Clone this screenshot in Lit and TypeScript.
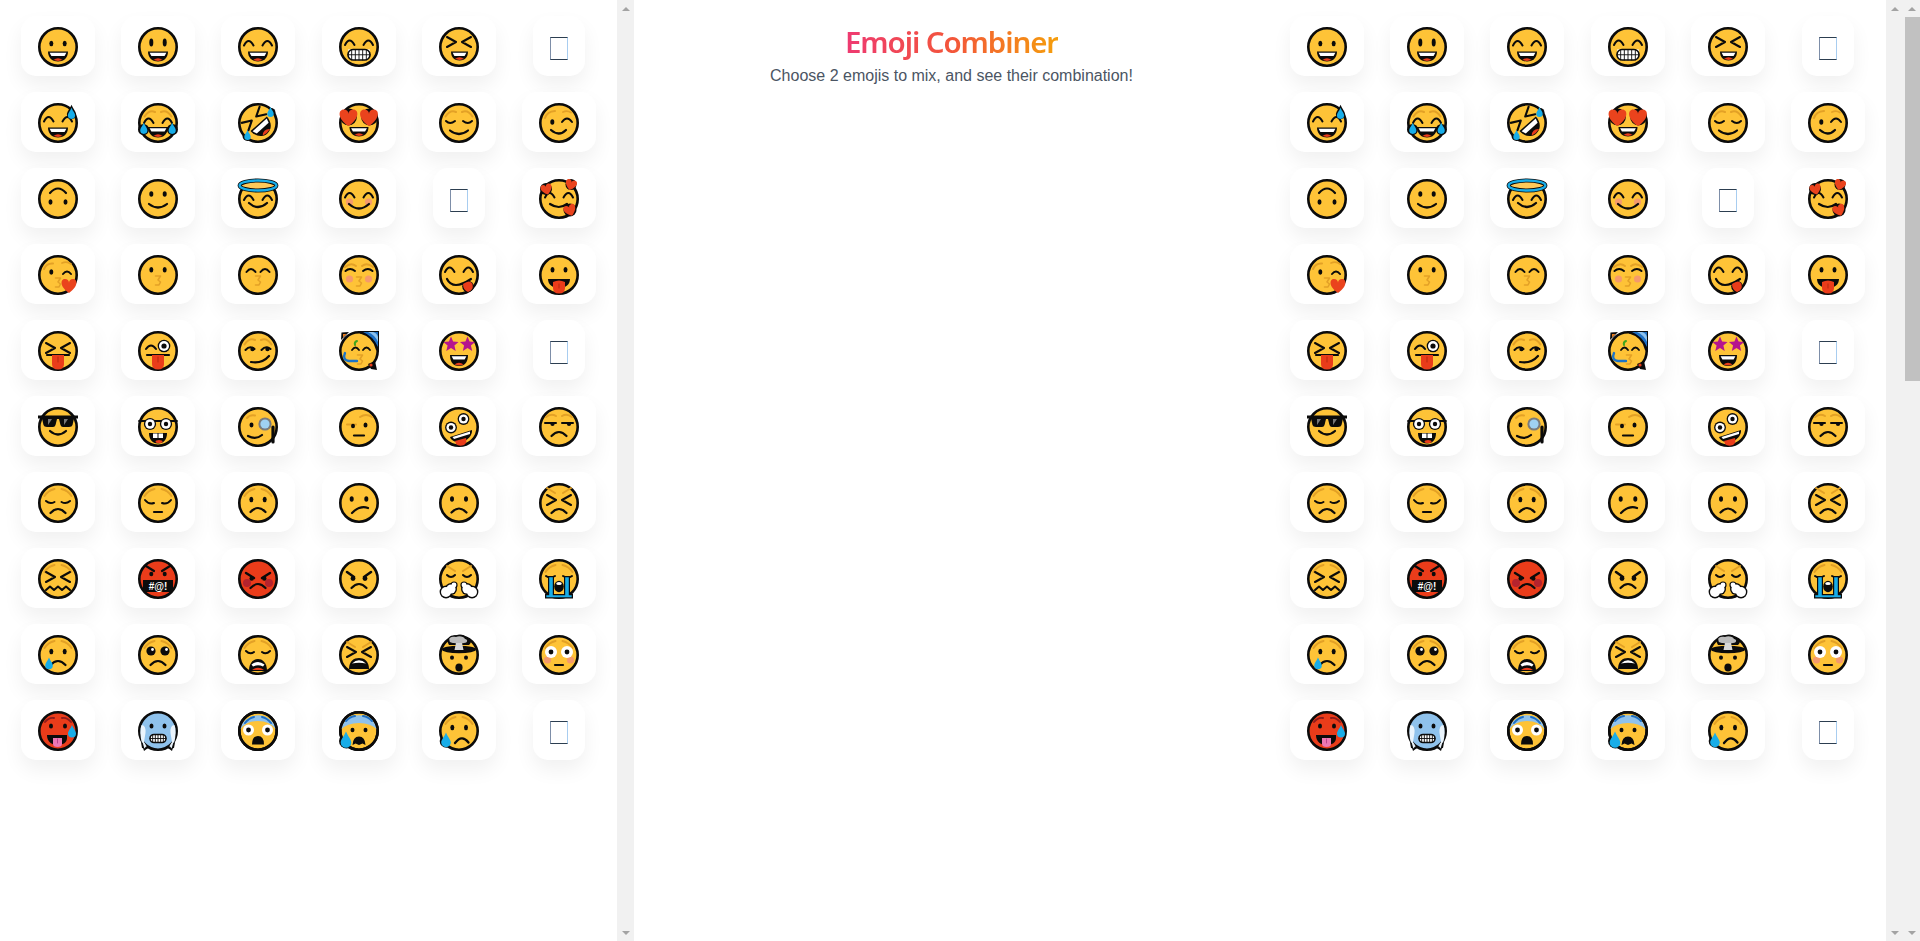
import { LitElement, html, css, svg } from "lit";
import { customElement, property } from "lit/decorators.js";

const Y = "#fec337", K = "#0b0b0b", R = "#ea3c1a", B = "#18ade8", O = "#e3a126", LB = "#8fc2ec", W = "#fff";

const P = (d: string, w = 2, c = K) =>
  svg`<path d=${d} fill="none" stroke=${c} stroke-width=${w} stroke-linecap="round" stroke-linejoin="round"/>`;
const F = (d: string, c = K) => svg`<path d=${d} fill=${c}/>`;
const C = (x: number, y: number, r: number, c = K) => svg`<circle cx=${x} cy=${y} r=${r} fill=${c}/>`;
const El = (x: number, y: number, rx: number, ry: number, c = K) => svg`<ellipse cx=${x} cy=${y} rx=${rx} ry=${ry} fill=${c}/>`;
const face = (c = Y) => svg`<circle cx="20" cy="20" r="18.7" fill=${c} stroke=${K} stroke-width="2.6"/>`;
const ring = () => svg`<circle cx="20" cy="20" r="18.7" fill="none" stroke=${K} stroke-width="2.6"/>`;

const dots = (y = 15, ry = 2.7, a = 13.3, b = 26.7) => svg`${El(a, y, 2, ry)}${El(b, y, 2, ry)}`;
const arcs = (y = 18.5) =>
  P(`M6 ${y} Q10.5 ${y - 9} 15.5 ${y} M24.5 ${y} Q29.5 ${y - 9} 34 ${y}`);
const brows = () => P("M6.5 13.5 Q11 6.5 17 9 M33.5 13.5 Q29 6.5 23 9", 2, O);
const sadBrows = () => P("M6.5 13 Q10 7.5 16.5 6 M33.5 13 Q30 7.5 23.5 6", 2, O);
const angryOr = () => P("M8 7 L16 12 M32 7 L24 12", 2, O);
const closed = (y = 19) => P(`M7 ${y} Q11 ${y + 4} 16 ${y} M24 ${y} Q29 ${y + 4} 33 ${y}`);
const xEyes = (y = 17.5) =>
  P(`M8 ${y - 5} L17 ${y} L8 ${y + 5} M32 ${y - 5} L23 ${y} L32 ${y + 5}`, 2.1);
const smile = (a = 11, b = 29, y = 25, d = 8) => P(`M${a} ${y} Q20 ${y + d} ${b} ${y}`, 2.2);
const frown = (y = 30) => P(`M12.5 ${y} Q20 ${y - 8} 27.5 ${y}`, 2.2);
const mouth = (a = 10, b = 30, t = 24.5, bt = 34.5) => {
  const m = (a + b) / 2;
  return svg`${F(`M${a} ${t} H${b} C${b} ${bt - 3} ${m + 5} ${bt} ${m} ${bt} C${m - 5} ${bt} ${a} ${bt - 3} ${a} ${t}Z`)}
  ${F(`M${a + 1.6} ${t + 1.2} H${b - 1.6} L${b - 3.4} ${t + 4.6} H${a + 3.4}Z`, W)}
  ${F(`M${m - 4.6} ${bt - 1.4} Q${m} ${bt - 5.2} ${m + 4.6} ${bt - 1.4} Q${m} ${bt + 0.2} ${m - 4.6} ${bt - 1.4}Z`, R)}`;
};
const kiss = (x = 20, y = 27) =>
  P(`M${x - 2.5} ${y - 5} H${x + 2.5} L${x} ${y - 1} L${x + 2.5} ${y + 1} L${x + 1} ${y + 4} H${x - 2.5}`, 1.6, O);
const heart = (x: number, y: number, s: number, rot = 0, c = "#ea431d") =>
  svg`<path transform="translate(${x} ${y}) rotate(${rot}) scale(${s})" d="M0 .95C-1.2 .15-1.1-.8-.5-.8-.2-.8 0-.6 0-.35 0-.6 .2-.8 .5-.8 1.1-.8 1.2 .15 0 .95Z" fill=${c}/>`;
const star = (x: number, y: number, r: number) => {
  const pts: string[] = [];
  for (let i = 0; i < 10; i++) {
    const rad = i % 2 ? r * 0.45 : r;
    const a = -Math.PI / 2 + (i * Math.PI) / 5;
    pts.push(`${(x + rad * Math.cos(a)).toFixed(1)},${(y + rad * Math.sin(a)).toFixed(1)}`);
  }
  return svg`<polygon points=${pts.join(" ")} fill="#b5148e"/>`;
};
const drop = (x: number, y: number, r: number, c = B) =>
  F(`M${x} ${y - r * 2} C${x + r * 0.4} ${y - r} ${x + r} ${y - r * 0.5} ${x + r} ${y + r * 0.1} A${r} ${r} 0 0 1 ${x - r} ${y + r * 0.1} C${x - r} ${y - r * 0.5} ${x - r * 0.4} ${y - r} ${x} ${y - r * 2}Z`, c);
const eye = (x: number, y: number, r = 5.5, p = 2.4) =>
  svg`${C(x, y, r + 1.3)}${C(x, y, r, W)}${C(x, y, p)}`;
const tongue = () => svg`${P("M9 24 H31", 2.2)}${F("M14 24 H26 V33 Q26 38.5 20 38.5 Q14 38.5 14 33Z", R)}${P("M20 26 V31", 1, "#b5280e")}`;
const grid = (a: number, b: number, t: number, bt: number, r: number) => {
  const lines: any[] = [];
  for (let x = a + (b - a) / 6; x < b - 1; x += (b - a) / 6) lines.push(P(`M${x} ${t} V${bt}`, 0.9));
  return svg`<rect x=${a} y=${t} width=${b - a} height=${bt - t} rx=${r} fill=${W} stroke=${K} stroke-width="1.6"/>${lines}${P(`M${a} ${(t + bt) / 2} H${b}`, 0.9)}`;
};

const E: Record<string, any> = {
  grin: svg`${face()}${dots(16.5, 2.7)}${mouth()}`,
  smiley: svg`${face()}${El(13.3, 15.5, 2, 4)}${El(26.7, 15.5, 2, 4)}${mouth()}`,
  smile3: svg`${face()}${arcs()}${mouth()}`,
  beam: svg`${face()}${arcs(18)}${F("M9 22.5 H31 C31 29 26 33.5 20 33.5 C14 33.5 9 29 9 22.5Z", W)}${grid(9, 31, 22.5, 33, 5)}`,
  squint: svg`${face()}${xEyes(15)}${mouth(12, 29, 24.5, 33.5)}`,
  sweat: svg`${face()}${arcs()}${mouth()}${drop(33.5, 11, 4.6, K)}${drop(33.5, 12, 3.6)}`,
  joy: svg`${face()}${brows()}${arcs(20)}${C(5.5, 26.5, 5.5)}${C(34.5, 26.5, 5.5)}${mouth(10, 30, 24, 34.5)}${drop(5.8, 27, 3.6)}${drop(34.2, 27, 3.6)}`,
  rofl: svg`${C(33, 9.5, 4.5)}${C(9.5, 33, 5)}${face()}<g transform="rotate(-42 20 20)">${xEyes(14)}${F("M9 21 H31 C31 29 26 34 20 34 C14 34 9 29 9 21Z")}${F("M10.5 22.5 H29.5 L28 27 H12Z", W)}${F("M15 32.5 Q20 27.5 25 32.5 Q20 34 15 32.5Z", R)}</g>${drop(32.5, 10.5, 3.2)}${drop(9.5, 33.5, 3.2)}`,
  hearts: svg`${face()}${C(9.5, 14, 8.4, K)}${C(30.5, 14, 8.4, K)}${heart(9.5, 14, 9.5)}${heart(30, 14, 9.5)}${mouth(10.5, 29.5, 24, 33.5)}`,
  relieved: svg`${face()}${brows()}${closed(18)}${smile(11, 29, 27.5, 7)}`,
  wink: svg`${face()}${P("M6 15 Q8 8.5 16 8", 2, O)}${P("M24 9 Q28 7 32 9.5", 1.8, O)}${El(13.3, 19, 2, 2.8)}${P("M23 19 Q28 12 33 19")}${smile(12, 27, 27, 7)}`,
  upside: svg`${face()}${P("M12 14 Q20 5 28 14", 2.2)}${El(12.5, 23, 2, 2.7)}${El(27.5, 23, 2, 2.7)}`,
  slight: svg`${face()}${dots(15, 2.8)}${smile(11, 29, 25, 7)}`,
  angel: svg`${face()}<ellipse cx="20" cy="6.5" rx="18.4" ry="5" fill="#fdc95a" stroke=${K} stroke-width="4"/><ellipse cx="20" cy="6.5" rx="18.4" ry="5" fill="none" stroke=${B} stroke-width="2.4"/>${arcs(21)}${smile(11, 29, 24, 8)}`,
  blush: svg`${face()}${arcs()}${C(10.5, 23, 3.6, "#f59a6c")}${C(29.5, 23, 3.6, "#f59a6c")}${smile(10, 30, 25, 9)}`,
  love: svg`${face()}${C(7, 10, 6)}${C(32, 5.5, 5.5)}${arcs(18.5)}${smile(11, 28, 25, 6)}${heart(7.5, 10, 6, -15)}${heart(32, 5.5, 6, 15)}${C(31, 31, 6.5)}${heart(31, 31, 6.5, -20)}`,
  blowkiss: svg`${face()}${P("M6 14 Q8.5 8 15 8.5", 2, O)}${P("M24 8 Q29 6 33 9", 1.8, O)}${El(13.3, 17, 2, 2.7)}${P("M25 19 Q29 14 33 19")}${kiss(20, 28)}${heart(31, 30.5, 8)}`,
  kissing: svg`${face()}${dots(14.7, 2.7)}${kiss(20, 26)}`,
  kiss3: svg`${face()}${P("M8.5 17 Q13 11 17.5 17 M22.5 17 Q27 11 31.5 17")}${kiss(20, 26)}`,
  kissclosed: svg`${face()}${P("M6 12 Q12 7 17 11 M34 12 Q28 7 23 11", 2, O)}${P("M6.5 16 Q11 12 16 16 M24 16 Q29 12 33.5 16")}${C(10.5, 24, 3.6, "#f59a6c")}${C(29.5, 24, 3.6, "#f59a6c")}${kiss(20, 27)}`,
  yum: svg`${face()}${arcs(17)}${P("M8 24 Q14 36 32 24", 2.2)}${C(29, 31.5, 5.8)}${F("M24 29 Q31 24 33.5 29 Q35 35 29 37 Q24 35 24 29Z", R)}`,
  tongue: svg`${face()}${dots(14.7, 2.7, 13.5, 26.5)}${F("M9 24 H31 C31 30 26 33 20 33 C14 33 9 30 9 24Z")}${F("M14 27 Q20 24 26 27 V33 Q26 38.5 20 38.5 Q14 38.5 14 33Z", R)}${P("M20 29 V33", 1, "#b5280e")}`,
  xtongue: svg`${face()}${xEyes(17)}${tongue()}`,
  winktongue: svg`${face()}${P("M8 18 Q13 11 18 18", 2.1)}${eye(26, 15, 5, 2.6)}${tongue()}`,
  smirk: svg`${face()}${brows()}${P("M7.5 19 Q12 14 16.5 18 M23.5 19 Q28 14 32.5 18")}${C(14.5, 18, 2.2)}${C(29.5, 18, 2.2)}${P("M13 31 Q24 33 31 25", 2.2)}`,
  party: svg`${F("M2.5 1.5 L10 1 L2 9Z")}${F("M4 3 L7.5 3 L4 6.5Z", "#ea7a1a")}${face()}${F("M21 0 H40 V21 L37 19 Q34 6 21 2.5Z")}${F("M24 1 H39 V16 Q34 5 24 1Z", "#1d6fc4")}${F("M29 1 H39 V11 Q36 4 29 1Z", LB)}${F("M34 1 H39 V6 Q38 2 34 1Z", "#1d6fc4")}${P("M16 14 Q15 11 18 10", 2, "#3fa51f")}${P("M13 19 Q16.5 14 20 19 M24 19 Q27.5 14 31 19", 1.8)}${P("M6 22 Q3 29 10 30 H18", 2.4, "#1c74c7")}${kiss(21, 29)}${F("M29 33 L36 30 L38 39 L32 38Z")}${C(32, 34, 1.6, R)}`,
  stars: svg`${face()}${star(12, 13.5, 8)}${star(28.5, 13.5, 8)}${mouth(11, 29, 24, 35)}`,
  cool: svg`${face()}${F("M0 8.5 H40 V11.5 H36 L34.5 18 Q34 20 31 20 H25 Q23 20 22.5 18 L21 12 H19 L17.5 18 Q17 20 15 20 H9 Q6 20 5.5 18 L4 11.5 H0Z")}${F("M10 12 L14 12 L10 18Z", "#777")}${F("M26 12 L30 12 L26 18Z", "#777")}${smile(12, 28, 24, 7)}`,
  nerd: svg`${face()}${P("M1 14 H39", 1.8)}${eye(12, 17, 4.8, 2.2)}${eye(28, 17, 4.8, 2.2)}${F("M11 26 H29 C29 32 26 36.5 20 36.5 C14 36.5 11 32 11 26Z")}${F("M15 26.5 H19.5 V31 H15Z M20.5 26.5 H25 V31 H20.5Z", W)}${El(21, 34.5, 3.5, 1.6, R)}`,
  mono: svg`${face()}${P("M9 11 Q12 7.5 17 8.5", 2, O)}${El(13.5, 18, 2, 2.4)}${P("M10 29 Q18 33 24 28", 2.2)}${P("M35 20 V35", 3.2)}${C(27, 17, 6.6, "#7b7b7b")}${C(27, 17, 4.6, "#9fd1f2")}`,
  raised: svg`${face()}${P("M8 17.5 H17", 2, O)}${P("M21 10 Q27 6 33 10", 2, O)}${El(14, 19, 2, 2.3)}${El(26.5, 18, 2, 2.6)}${P("M15 28.5 H25", 2.2)}`,
  zany: svg`${face()}${eye(12, 20.5, 4.6, 2.2)}${eye(24.5, 12, 4.6, 2.2)}${F("M11 30 L33 23 C33.5 28 29 34 22 35 C16 36 12 33 11 30Z")}${F("M13.5 30 L31 24.5 L31 27 L15 32Z", W)}${F("M16 34 L27 31 Q28.5 36 25 38 Q20 40 17 37Z", R)}`,
  unamused: svg`${face()}${P("M7 10 Q12 6 17 9 M33 10 Q28 6 23 9", 2, O)}${P("M6 16 H17 M23 16 H34", 2)}${C(13.5, 17, 2.1)}${C(30, 17, 2.1)}${frown(29)}`,
  dis: svg`${face()}${sadBrows()}${P("M8 18 Q12 21.5 16.5 19 M23.5 19 Q28 21.5 32 18")}${frown(30)}`,
  pensive: svg`${face()}${sadBrows()}${P("M7 17 Q11 22 16 20 M24 20 Q29 22 33 17")}${P("M16 29 H24", 2.2)}`,
  worried: svg`${face()}${sadBrows()}${dots(16.5, 2.7)}${frown(29)}`,
  confused: svg`${face()}${dots(16, 2.8, 12.7, 27.3)}${P("M13 30 Q21 22 29 25", 2.2)}`,
  frown: svg`${face()}${dots(16, 2.8, 13, 27)}${frown(29.5)}`,
  persevere: svg`${face()}${P("M8 5 L16 10 M32 5 L24 10", 2, O)}${xEyes(17)}${frown(30)}`,
  confounded: svg`${face()}${sadBrows()}${xEyes(18)}${P("M8 31 L12 27.5 L16 31 L20 27.5 L24 31 L28 27.5 L32 31", 2.1)}`,
  cursing: svg`${face(R)}${P("M8 7 L16 12 M32 7 L24 12", 2.2)}${dots(15, 2.2)}${F("M5 21 H35 V33 H5Z")}<text x="20" y="31" class="sym" text-anchor="middle">#@!</text>`,
  rage: svg`${face(R)}${C(9, 24, 4, "#b5232e")}${C(31, 24, 4, "#b5232e")}${P("M8 14 L16 19 M32 14 L24 19", 2.4)}${C(13.7, 19.5, 2.2)}${C(26.3, 19.5, 2.2)}${frown(29)}`,
  angry: svg`${face()}${P("M8 13 L15 18 M32 13 L25 18", 2.6)}${C(14, 19.5, 2.4)}${C(26, 19.5, 2.4)}${frown(29)}`,
  steam: svg`${face()}${angryOr()}${P("M8 16 Q12 20 16 16 M24 16 Q28 20 32 16")}${C(7, 33, 6.4)}${C(33, 33, 6.4)}${C(12, 30, 6)}${C(28, 30, 6)}${C(15, 26, 3.6)}${C(25, 26, 3.6)}${C(7, 33, 5, W)}${C(33, 33, 5, W)}${C(12, 30, 4.6, W)}${C(28, 30, 4.6, W)}${C(15, 26, 2.4, W)}${C(25, 26, 2.4, W)}`,
  sob: svg`${face()}${sadBrows()}${P("M7 17 Q11 20 16 17 M24 17 Q29 20 33 17")}${F("M6 39.5 V35 H9 V17 H15 V35 H25 V17 H31 V35 H34 V39.5Z")}${F("M7.3 38.3 V36.3 H10.2 V18.2 H13.8 V36.3 H26.2 V18.2 H29.8 V36.3 H32.7 V38.3Z", B)}${El(20, 27.5, 4.8, 5.8)}${El(20, 24.5, 2.8, 1.6, W)}`,
  cry: svg`${face()}${sadBrows()}${dots(16.5, 2.7)}${frown(30)}${drop(11, 30, 3.8)}`,
  plead: svg`${face()}${sadBrows()}${C(13, 16, 4.6)}${C(27, 16, 4.6)}${C(14.5, 14.5, 1.4, W)}${C(28.5, 14.5, 1.4, W)}${frown(30)}`,
  weary: svg`${face()}${sadBrows()}${P("M8 16 Q12 20 16 17 M24 17 Q28 20 32 16")}${F("M11 36 C11 27 16 24 20 24 C24 24 29 27 29 36 Z")}${F("M13.5 29.5 Q20 24.5 26.5 29.5 L25 31.5 Q20 29 15 31.5Z", W)}${F("M14 35 Q20 30.5 26 35Z", R)}`,
  tired: svg`${face()}${angryOr()}${xEyes(17)}${F("M10 34 C10 26 15 23 20 23 C25 23 30 26 30 34 Z")}${F("M13 28.5 Q20 22 27 28.5 Q20 27 13 28.5Z", W)}`,
  blown: svg`${face()}${F("M9 8 C7 3 12 -.5 17 .5 C20 -1.5 26 -.5 27 2.5 C33 3 33 8 30 10 H10Z")}${El(20, 14.5, 17, 3.8)}${F("M10.5 5 C9 2.5 14 1 17 2 C20 .5 25 1.5 26 4 C29 4 29 8 25 8 Q20 9.5 15 8 C12 8 10 7 10.5 5Z", "#bcbcbc")}${F("M17 8 H23 L24.5 15 H15.5Z", "#d8d8d8")}${dots(22.6, 2.2, 13, 27)}${El(20, 32.5, 3.6, 4)}`,
  flushed: svg`${face()}${sadBrows()}${C(8.5, 25, 3.6, "#f59a6c")}${C(31.5, 25, 3.6, "#f59a6c")}${C(12, 17, 6, W)}${C(28, 17, 6, W)}${C(12, 17, 2.4)}${C(28, 17, 2.4)}${P("M16 30 H24", 2.2)}`,
  hot: svg`${face(R)}${P("M7 11 Q11 6 16 7 M33 11 Q29 6 24 7", 1.9, "#8c1c1c")}${dots(15, 2.6, 13, 27)}${F("M9 24 H29 V27 C29 32 24 34 20 34 C14 34 9 31 9 24Z")}${F("M15 27 H24 V33 Q24 36 19.5 36 Q15 36 15 33Z", "#ee78b4")}${P("M19.5 28 V32", 0.9, "#b54088")}${drop(34, 22, 4)}`,
  cold: svg`${F("M2 26 L4 37 L9 38 L12 33 H28 L31 38 L36 37 L38 26Z")}${face(LB)}${F("M3.5 14 Q8 14 7.5 22 L6 31 L9 36 L4 33 Q1 20 3.5 14Z M36.5 14 Q32 14 32.5 22 L34 31 L31 36 L36 33 Q39 20 36.5 14Z", "#eaf4fc")}${F("M3 30 L6 40 L10 37Z M37 30 L34 40 L30 37Z", K)}${F("M4.2 30 L6.4 37.6 L8.4 35Z M35.8 30 L33.6 37.6 L31.6 35Z", "#eaf4fc")}${dots(15, 2.5, 13.5, 26.5)}${grid(12, 28, 23.5, 31.5, 4)}`,
  fear: svg`${face()}${F("M1.5 19 A19 19 0 0 1 38.5 19 Q32 10 20 10 Q8 10 1.5 19Z", LB)}${ring()}${P("M7 12 Q11 7 16 6 M33 12 Q29 7 24 6", 2, "#1d6fc4")}${C(10.5, 19, 5.5, W)}${C(29.5, 19, 5.5, W)}${C(10.5, 19, 2.4)}${C(29.5, 19, 2.4)}${F("M14 33.5 Q14 25 20 25 Q26 25 26 33.5 Z")}`,
  cold2: svg`${C(7.5, 30, 7.5)}${face()}${F("M1.5 19 A19 19 0 0 1 38.5 19 Q32 12 20 12 Q8 12 1.5 19Z", LB)}${ring()}${P("M7 10 Q11 5.5 16 5 M33 10 Q29 5.5 24 5", 2, "#1d6fc4")}${dots(19, 2.3, 13.5, 26.5)}${F("M13.5 34 Q14 25.5 20 25.5 Q26 25.5 26.5 34 L23.5 32.5 L20 34 L16.5 32.5Z")}${drop(7, 31, 5.3)}`,
  sad: svg`${C(7.5, 30, 6.8)}${face()}${sadBrows()}${dots(16.5, 2.7, 13.3, 27)}${P("M16 32 Q23 23 29.5 31.5", 2.3)}${drop(7, 31, 4.8)}`,
};

const ROWS: (string | null)[] = [
  "grin", "smiley", "smile3", "beam", "squint", null,
  "sweat", "joy", "rofl", "hearts", "relieved", "wink",
  "upside", "slight", "angel", "blush", null, "love",
  "blowkiss", "kissing", "kiss3", "kissclosed", "yum", "tongue",
  "xtongue", "winktongue", "smirk", "party", "stars", null,
  "cool", "nerd", "mono", "raised", "zany", "unamused",
  "dis", "pensive", "worried", "confused", "frown", "persevere",
  "confounded", "cursing", "rage", "angry", "steam", "sob",
  "cry", "plead", "weary", "tired", "blown", "flushed",
  "hot", "cold", "fear", "cold2", "sad", null,
];

@customElement("scroll-strip")
class ScrollStrip extends LitElement {
  @property({ type: Boolean }) thumb = false;
  static styles = css`
    :host { display: flex; flex-direction: column; width: 17px; height: 941px; background: #f1f1f1; flex: none; }
    .btn { height: 17px; display: flex; align-items: center; justify-content: center; flex: none; }
    .up { width: 0; height: 0; border: 4px solid transparent; border-top: 0; border-bottom: 4px solid #a3a3a3; }
    .down { width: 0; height: 0; border: 4px solid transparent; border-bottom: 0; border-top: 4px solid #a3a3a3; }
    .track { flex: 1; display: flex; }
    .thumb { width: 15px; height: 364px; background: #c1c1c1; margin-left: 2px; }
  `;
  render() {
    return html`
      <div class="btn"><div class="up"></div></div>
      <div class="track">${this.thumb ? html`<div class="thumb"></div>` : ""}</div>
      <div class="btn"><div class="down"></div></div>
    `;
  }
}

@customElement("emoji-panel")
class EmojiPanel extends LitElement {
  static styles = css`
    :host { display: flex; width: 634px; height: 941px; flex: none; }
    .grid {
      flex: 1;
      display: grid;
      grid-template-columns: repeat(6, 100.2px);
      grid-auto-rows: 60px;
      row-gap: 16px;
      padding: 16px 0 0 8px;
      align-content: start;
      justify-items: center;
    }
    .card {
      display: flex;
      padding: 11px 17px 9px;
      background: #fff;
      border-radius: 15px;
      box-shadow: 0 10px 20px rgba(0, 0, 0, 0.06);
      box-sizing: border-box;
      height: 60px;
    }
    .card svg { display: block; width: 40px; height: 40px; overflow: visible; }
    .sym { font: 700 10px "Liberation Sans", sans-serif; fill: #fff; }
    .tofu {
      display: block;
      box-sizing: border-box;
      width: 18px;
      height: 23px;
      margin-top: 10px;
      border: 1px solid #2c3e50;
      border-right-color: #a8cdf0;
      border-left-color: #7d8ea8;
    }
  `;
  render() {
    return html`<div class="grid">
      ${ROWS.map((n) =>
        html`<div class="card">${n
          ? html`<svg viewBox="0 0 40 40" role="img" aria-label=${n}>${E[n]}</svg>`
          : html`<span class="tofu"></span>`}</div>`)}
    </div><scroll-strip></scroll-strip>`;
  }
}

@customElement("app-root")
class AppRoot extends LitElement {
  static styles = css`
    :host { display: flex; width: 1920px; height: 941px; overflow: hidden; background: #fff; }
    .center { flex: 1; display: flex; flex-direction: column; align-items: center; padding-top: 21px; }
    h1 {
      margin: 0;
      font: 600 29.5px/42px "Noto Sans", sans-serif;
      letter-spacing: -1.1px;
      background: linear-gradient(90deg, #ee3a72 0%, #f3553a 50%, #f59e0b 100%);
      -webkit-background-clip: text;
      background-clip: text;
      color: transparent;
    }
    p { margin: 0; font: 16px/22px "Liberation Sans", sans-serif; color: #4b5563; margin-top: 2px; }
  `;
  render() {
    return html`
      <emoji-panel></emoji-panel>
      <div class="center">
        <h1>Emoji Combiner</h1>
        <p>Choose 2 emojis to mix, and see their combination!</p>
      </div>
      <emoji-panel></emoji-panel>
      <scroll-strip thumb></scroll-strip>
    `;
  }
}
